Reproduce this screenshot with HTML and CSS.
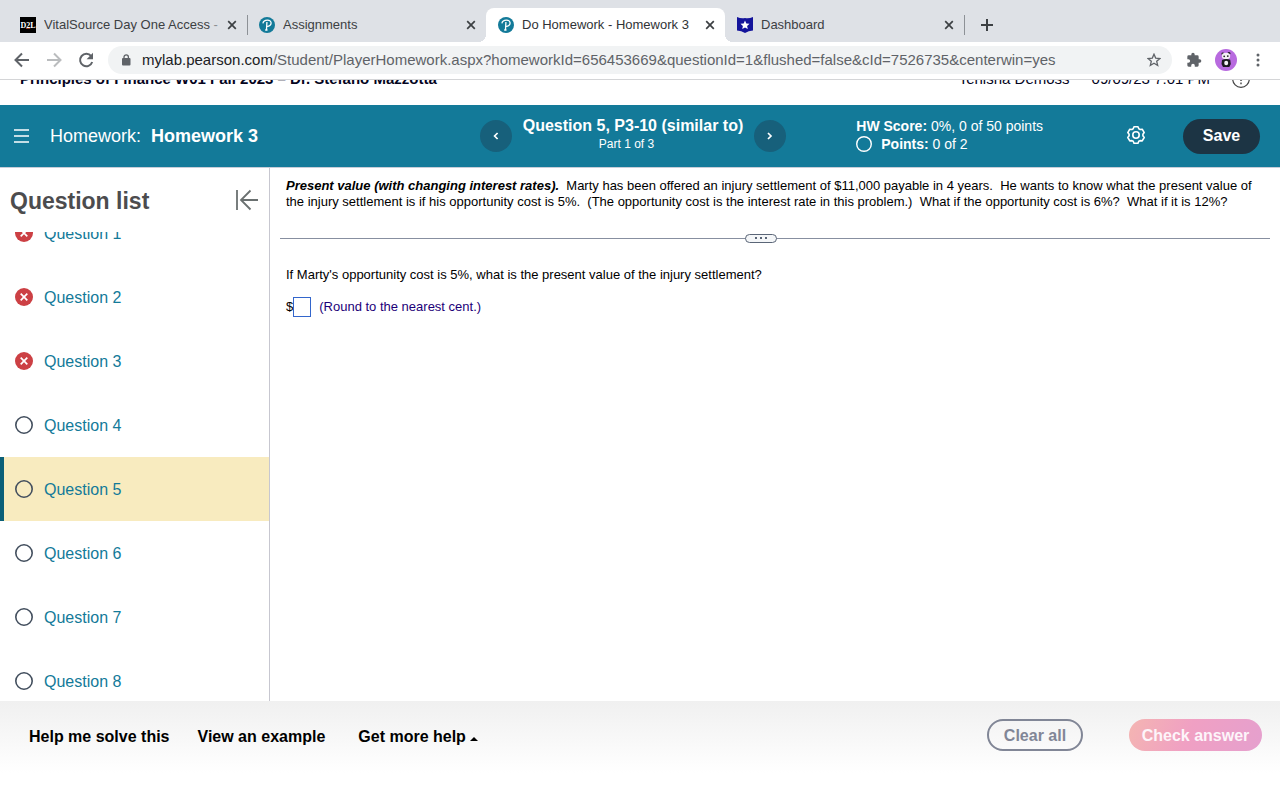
FILE: index.html
```html
<!DOCTYPE html>
<html lang="en">
<head>
<meta charset="utf-8">
<title>Do Homework - Homework 3</title>
<link rel="stylesheet" href="styles.css">
</head>
<body>
<svg class="defs" aria-hidden="true">
  <symbol id="close" viewBox="0 0 10 10"><path d="M1.2 1.2l7.6 7.6M8.8 1.2L1.2 8.8" stroke="#3c4043" stroke-width="1.7" fill="none"/></symbol>
  <symbol id="pearson" viewBox="0 0 16 16"><circle cx="8" cy="8" r="8" fill="#137a99"/><path d="M3.900 6.400C4.300 4.300 6.200 3.200 8.400 3.200c2.300 0 3.700 1.100 3.700 2.900 0 2.100-2 3.300-4 3.200M7.900 5L7.500 12.700M6.200 13h2.300" stroke="#fff" stroke-width="1.300" fill="none"/></symbol>
  <symbol id="wrong" viewBox="0 0 18 18"><circle cx="9" cy="9" r="9" fill="#cc4044"/><path d="M5.700 5.700l6.600 6.600M12.300 5.700l-6.600 6.600" stroke="#fff" stroke-width="1.700" fill="none"/></symbol>
  <symbol id="open" viewBox="0 0 18 18"><circle cx="9" cy="9" r="8.200" fill="none" stroke="currentColor" stroke-width="1.600"/></symbol>
</svg>

<div class="browser">
  <div class="tabs">
    <div class="tab">
      <svg class="favicon" viewBox="0 0 16 16"><path fill="#000" d="M0 0h16v16H0z"/><path fill="#b5492b" d="M6 10.800h4.200v1H6z"/><text class="d2l" x="8" y="10.500" text-anchor="middle">D2L</text></svg>
      <span class="tab-title">VitalSource Day One Access <span class="faded">-</span></span>
      <button class="close" aria-label="Close tab"><svg><use href="#close"/></svg></button>
    </div>
    <div class="tab divided">
      <svg class="favicon"><use href="#pearson"/></svg>
      <span class="tab-title">Assignments</span>
      <button class="close" aria-label="Close tab"><svg><use href="#close"/></svg></button>
    </div>
    <div class="tab active">
      <svg class="favicon"><use href="#pearson"/></svg>
      <span class="tab-title">Do Homework - Homework 3</span>
      <button class="close" aria-label="Close tab"><svg><use href="#close"/></svg></button>
    </div>
    <div class="tab">
      <svg class="favicon" viewBox="0 0 16 16"><path fill="#14149b" d="M0 0q4 1.700 8 1 4 .7 8-1v13.600q-4.500.400-8 2.400-3.500-2-8-2.400z"/><path fill="#fff" d="M8 3.500l1.300 3 3.200.3-2.400 2.100.7 3.200L8 10.400l-2.800 1.700.7-3.200-2.400-2.100 3.200-.3z"/></svg>
      <span class="tab-title">Dashboard</span>
      <button class="close" aria-label="Close tab"><svg><use href="#close"/></svg></button>
    </div>
    <button class="new-tab" aria-label="New tab"><svg viewBox="0 0 12 12"><path d="M6 0v12M0 6h12" stroke="#3c4043" stroke-width="2"/></svg></button>
  </div>

  <div class="toolbar">
    <div class="history">
      <button aria-label="Back"><svg viewBox="0 0 16 16" fill="none" stroke="#5f6368" stroke-width="2"><path d="M15 8H2M8 1.500L1.500 8 8 14.500"/></svg></button>
      <button aria-label="Forward"><svg viewBox="0 0 16 16" fill="none" stroke="#babcbe" stroke-width="2"><path d="M1 8h13M8 1.500L14.500 8 8 14.500"/></svg></button>
      <button aria-label="Reload"><svg viewBox="0 0 16 16" fill="none" stroke="#5f6368" stroke-width="2"><path d="M13.200 4.200A6.200 6.200 0 1 0 14.200 10"/><path d="M15 .8v6.400H8.600z" fill="#5f6368" stroke="none"/></svg></button>
    </div>
    <div class="address">
      <svg class="lock" viewBox="0 0 10 12"><rect x="1" y="4" width="8.500" height="7.500" rx="1" fill="#5f6368"/><path d="M3 4.500V3a2.200 2.200 0 0 1 4.400 0v1.500" fill="none" stroke="#5f6368" stroke-width="1.300"/></svg>
      <span class="url"><b>mylab.pearson.com</b>/Student/PlayerHomework.aspx?homeworkId=656453669&amp;questionId=1&amp;flushed=false&amp;cId=7526735&amp;centerwin=yes</span>
      <button class="star" aria-label="Bookmark"><svg viewBox="0 0 14 14"><path d="M7 1.200l1.700 3.900 4.200.4-3.200 2.800 1 4.200L7 10.300l-3.700 2.200 1-4.200L1.100 5.500l4.200-.4z" fill="none" stroke="#5f6368" stroke-width="1.300"/></svg></button>
    </div>
    <button class="puzzle" aria-label="Extensions"><svg viewBox="0 0 24 24"><path fill="#5f6368" d="M20.500 11H19V7a2 2 0 0 0-2-2h-4V3.500a2.500 2.500 0 0 0-5 0V5H4a2 2 0 0 0-2 2v3.800h1.500a2.700 2.700 0 0 1 0 5.400H2V20a2 2 0 0 0 2 2h3.800v-1.500a2.700 2.700 0 0 1 5.400 0V22H17a2 2 0 0 0 2-2v-4h1.500a2.500 2.500 0 0 0 0-5z"/></svg></button>
    <button class="avatar" aria-label="Profile"><svg viewBox="0 0 22 22"><circle cx="11" cy="11" r="11" fill="#b86adf"/><circle cx="7.800" cy="4.800" r="1.400" fill="#222"/><circle cx="14" cy="4.300" r="1.400" fill="#222"/><ellipse cx="11" cy="7" rx="4.200" ry="3.200" fill="#f4f0f4"/><circle cx="9.200" cy="7.300" r=".9" fill="#222"/><circle cx="12.800" cy="7.100" r=".9" fill="#222"/><path d="M7 11q4-2 8.200-.3l.6 4.300-1.500 3H8l-1.500-3z" fill="#1c1a1e"/><ellipse cx="11.200" cy="14" rx="2" ry="2.300" fill="#f4f0f4"/></svg></button>
    <button class="menu" aria-label="Menu"><svg viewBox="0 0 4 14" fill="#5f6368"><circle cx="2" cy="2" r="1.500"/><circle cx="2" cy="7" r="1.500"/><circle cx="2" cy="12" r="1.500"/></svg></button>
  </div>
</div>

<div class="course">
  <div class="course-row">
    <strong>Principles of Finance W01 Fall 2023 – Dr. Stefano Mazzotta</strong>
    <span class="user">Tenisha Demoss</span>
    <span class="date">09/09/23 7:01 PM</span>
    <svg class="help" viewBox="0 0 18 18"><circle cx="9" cy="9" r="8.300" fill="none" stroke="#444" stroke-width="1.200"/><path d="M6.500 7a2.500 2.500 0 1 1 2.500 2.500V11M9 12.500v1.700" fill="none" stroke="#444" stroke-width="1.400"/></svg>
  </div>
</div>

<header class="header">
  <div class="assignment">
    <button class="burger" aria-label="Menu"><svg viewBox="0 0 16 14"><path d="M0 1h15M0 7h15M0 13h15" stroke="#fff" stroke-width="1.600"/></svg></button>
    <h1>Homework: <strong>Homework 3</strong></h1>
  </div>
  <nav class="pager">
    <button aria-label="Previous question"><svg viewBox="0 0 8 10"><path d="M5.600 2L2.600 5l3 3" fill="none" stroke="#fff" stroke-width="1.700"/></svg></button>
    <div class="current"><strong>Question 5, P3-10 (similar to)</strong><span>Part 1 of 3</span></div>
    <button aria-label="Next question"><svg viewBox="0 0 8 10"><path d="M2 2l3 3-3 3" fill="none" stroke="#fff" stroke-width="1.700"/></svg></button>
  </nav>
  <div class="status">
    <div class="score">
      <div><b>HW Score:</b> 0%, 0 of 50 points</div>
      <div class="points"><svg><use href="#open"/></svg><span><b>Points:</b> 0 of 2</span></div>
    </div>
    <button class="gear" aria-label="Settings"><svg viewBox="0 0 20 20" fill="none" stroke="#fff" stroke-width="1.600"><path d="M8 1.800h4l.8 2 1.300.7 2.100-.3 2 3.400-1.300 1.700v1.500l1.300 1.700-2 3.400-2.100-.3-1.300.7-.8 2H8l-.8-2-1.300-.7-2.100.3-2-3.400 1.300-1.700V9.300L1.800 7.600l2-3.400 2.100.3 1.300-.7z" stroke-linejoin="round"/><circle cx="10" cy="10" r="3.200"/></svg></button>
    <button class="save">Save</button>
  </div>
</header>

<main class="main">
  <aside class="sidebar">
    <div class="side-head">
      <h2>Question list</h2>
      <button aria-label="Collapse list"><svg viewBox="0 0 24 22" fill="none" stroke="#6a7070" stroke-width="1.800"><path d="M2 1v20M23 11H6M15.500 1.500L6 11l9.500 9.500"/></svg></button>
    </div>
    <div class="list-view">
      <ul class="list">
        <li><a href="#q1"><svg><use href="#wrong"/></svg><span>Question 1</span></a></li>
        <li><a href="#q2"><svg><use href="#wrong"/></svg><span>Question 2</span></a></li>
        <li><a href="#q3"><svg><use href="#wrong"/></svg><span>Question 3</span></a></li>
        <li><a href="#q4"><svg><use href="#open"/></svg><span>Question 4</span></a></li>
        <li><a class="selected" href="#q5"><svg><use href="#open"/></svg><span>Question 5</span></a></li>
        <li><a href="#q6"><svg><use href="#open"/></svg><span>Question 6</span></a></li>
        <li><a href="#q7"><svg><use href="#open"/></svg><span>Question 7</span></a></li>
        <li><a href="#q8"><svg><use href="#open"/></svg><span>Question 8</span></a></li>
      </ul>
    </div>
  </aside>
  <section class="problem">
    <p class="prompt"><strong><em>Present value (with changing interest rates).</em></strong>&nbsp; Marty has been offered an injury settlement of $11,000 payable in 4 years.&nbsp; He wants to know what the present value of the injury settlement is if his opportunity cost is 5%.&nbsp; (The opportunity cost is the interest rate in this problem.)&nbsp; What if the opportunity cost is 6%?&nbsp; What if it is 12%?</p>
    <div class="splitter"><button aria-label="Resize panels"><svg viewBox="0 0 14 2" fill="#5a6577"><path d="M1 0h2v2H1zM6 0h2v2H6zM11 0h2v2h-2z"/></svg></button></div>
    <p class="question">If Marty's opportunity cost is 5%, what is the present value of the injury settlement?</p>
    <div class="answer"><label for="amount">$</label><input id="amount" type="text"><span>(Round to the nearest cent.)</span></div>
  </section>
</main>

<footer class="footer">
  <div class="aids">
    <button>Help me solve this</button>
    <button>View an example</button>
    <button class="more">Get more help <svg viewBox="0 0 8 4"><path d="M0 4l4-4 4 4z"/></svg></button>
  </div>
  <div class="actions">
    <button class="clear">Clear all</button>
    <button class="check">Check answer</button>
  </div>
</footer>
</body>
</html>
```
FILE: styles.css
```css
* { box-sizing: border-box; }
body {
  margin: 0;
  height: 100vh;
  display: flex;
  flex-direction: column;
  overflow: hidden;
  background: #fff;
  color: #000;
  font-family: "Liberation Sans", Arial, sans-serif;
}
button {
  display: flex;
  align-items: center;
  justify-content: center;
  flex: none;
  margin: 0;
  padding: 0;
  border: 0;
  background: none;
  color: inherit;
  font: inherit;
  white-space: nowrap;
}
svg { display: block; flex: none; }
.defs { position: absolute; width: 0; height: 0; }
h1, h2, p, ul { margin: 0; padding: 0; }

/* Browser chrome */
.tabs { display: flex; align-items: flex-end; height: 42px; padding-left: 8px; background: #dee1e6; }
.tab {
  position: relative;
  display: flex;
  align-items: center;
  flex: 0 1 239px;
  min-width: 0;
  height: 34px;
  padding: 0 10px 0 12px;
  font-size: 13px;
  line-height: 16px;
  color: #3c4043;
}
.tab.active { background: #fff; border-radius: 8px 8px 0 0; color: #303336; }
.tab.active::before, .tab.active::after {
  content: "";
  position: absolute;
  bottom: 0;
  width: 8px;
  height: 8px;
}
.tab.active::before { left: -8px; background: radial-gradient(circle at 0 0, #dee1e6 8px, #fff 8px); }
.tab.active::after { right: -8px; background: radial-gradient(circle at 100% 0, #dee1e6 8px, #fff 8px); }
.tab.divided::before {
  content: "";
  position: absolute;
  left: 0;
  top: 7px;
  width: 1px;
  height: 20px;
  background: #8d9196;
}
.favicon { width: 16px; height: 16px; margin-right: 8px; }
.d2l { font: bold 8px "Liberation Serif", serif; fill: #fff; }
.tab-title { flex: 1; min-width: 0; overflow: hidden; white-space: nowrap; }
.faded { opacity: .5; }
.close svg { width: 10px; height: 10px; }
.new-tab { height: 20px; margin-bottom: 7px; padding: 0 16px; border-left: 1px solid #8d9196; }
.new-tab svg { width: 12px; height: 12px; }

.toolbar { display: flex; align-items: center; height: 38px; padding: 0 14px 1px; border-bottom: 1px solid #d4d5d7; background: #fff; }
.history { display: flex; gap: 16px; margin-right: 14px; }
.history svg { width: 16px; height: 16px; }
.address { display: flex; align-items: center; flex: 1; min-width: 0; height: 28px; padding: 0 11px 0 13px; border-radius: 14px; background: #f1f3f4; }
.lock { width: 10px; height: 12px; margin-right: 11px; }
.url { flex: 1; min-width: 0; overflow: hidden; white-space: nowrap; font-size: 15px; line-height: 20px; color: #5f6368; }
.url b { font-weight: normal; color: #202124; }
.star svg { width: 14px; height: 14px; }
.puzzle { margin-left: 14px; }
.puzzle svg { width: 16px; height: 16px; }
.avatar { margin-left: 13px; }
.avatar svg { width: 22px; height: 22px; }
.menu { margin-left: 19px; margin-right: 6px; }
.menu svg { width: 4px; height: 14px; }

/* Course bar, scrolled partly out of view */
.course { height: 25px; overflow: hidden; flex: none; }
.course-row {
  display: flex;
  align-items: center;
  height: 20px;
  margin-top: -11px;
  padding: 0 30px 0 20px;
  font-size: 15px;
  line-height: 20px;
  color: #05051e;
}
.user { margin-left: auto; }
.date { margin-left: 22px; }
.help { width: 18px; height: 18px; margin-left: 22px; }

/* Assignment header */
.header {
  display: grid;
  grid-template-columns: 480fr auto 494fr;
  align-items: center;
  flex: none;
  height: 63px;
  border-bottom: 1px solid #c7cdd8;
  background: #137a99;
  color: #fff;
}
.assignment { display: flex; align-items: center; gap: 20px; padding-left: 14px; }
.burger svg { width: 16px; height: 14px; }
h1 { font-size: 18px; line-height: 24px; font-weight: normal; white-space: nowrap; }
h1 strong { margin-left: 5px; }
.pager { display: flex; align-items: center; gap: 11px; }
.pager button { width: 32px; height: 32px; border-radius: 50%; background: #17607b; }
.pager svg { width: 8px; height: 10px; }
.current { display: flex; flex-direction: column; align-items: center; padding-bottom: 4px; font-size: 16px; line-height: 20px; white-space: nowrap; }
.current span { padding-right: 13px; font-size: 12px; line-height: 16px; }
.status { display: flex; align-items: center; padding-right: 20px; }
.score { margin-left: 70px; padding-bottom: 2px; font-size: 14px; line-height: 18px; white-space: nowrap; }
.points { display: flex; align-items: center; gap: 9px; }
.points svg { width: 16px; height: 16px; }
.gear { margin-left: auto; padding-bottom: 3px; }
.gear svg { width: 20px; height: 20px; }
.save { width: 77px; height: 35px; margin-left: 37px; border-radius: 18px; background: #1c3444; font-size: 16px; font-weight: bold; }

/* Question list */
.main { display: flex; flex: 1; min-height: 0; }
.sidebar { display: flex; flex-direction: column; flex: none; width: 270px; border-right: 1px solid #c7c7d0; }
.side-head { display: flex; align-items: center; justify-content: space-between; flex: none; height: 64px; padding: 0 10px; }
h2 { padding-top: 2px; font-size: 23px; line-height: 28px; color: #4c4c4e; }
.side-head svg { width: 24px; height: 22px; }
.list-view { flex: 1; min-height: 0; overflow: hidden; }
.list { margin-top: -31px; list-style: none; }
.list a {
  display: flex;
  align-items: center;
  gap: 11px;
  height: 64px;
  padding-left: 11px;
  border-left: 4px solid transparent;
  color: #137a99;
  font-size: 16px;
  line-height: 20px;
  text-decoration: none;
}
.list a.selected { border-left-color: #0b5f78; background: #f8ebbf; }
.list span { padding-top: 2px; }
.list svg { width: 18px; height: 18px; color: #434f5e; }

/* Problem */
.problem { flex: 1; min-width: 0; padding: 10px 10px 0; font-size: 13px; line-height: 16px; }
.prompt { padding: 0 6px; }
.splitter { display: flex; align-items: center; justify-content: center; height: 10px; margin: 23px 0 24px; background: linear-gradient(#878fa0, #878fa0) center / 100% 1px no-repeat; }
.splitter button { width: 32px; height: 9px; margin-right: 28px; border: 1px solid #5a6577; border-radius: 5px; background: #f4f6f8; }
.splitter svg { width: 14px; height: 2px; }
.question { padding: 0 6px; }
.answer { display: flex; align-items: center; height: 20px; margin-top: 14px; padding: 0 6px; }
.answer input { width: 18px; height: 20px; padding: 0; border: 1px solid #3366cc; background: #fff; font: inherit; }
.answer span { margin-left: 8px; color: #1c0078; }

/* Footer */
.footer { display: flex; justify-content: space-between; flex: none; height: 99px; padding: 18px 18px 0 29px; background: linear-gradient(#f0f0f0, #fff 72px); font-size: 16px; font-weight: bold; }
.aids, .actions { display: flex; align-items: flex-start; }
.aids button { height: 36px; }
.aids { gap: 28px; }
.aids .more { gap: 4px; margin-left: 5px; }
.aids .more svg { width: 8px; height: 4px; margin-top: 3px; }
.actions { gap: 46px; }
.actions button { height: 32px; padding-top: 2px; border-radius: 16px; }
.clear { width: 96px; border: 2px solid #818696; color: #818696; }
.check { width: 133px; background: linear-gradient(110deg, #f4b5b2, #f0a0c3 45%, #e5a0ce); color: #fdf5fa; }
```
